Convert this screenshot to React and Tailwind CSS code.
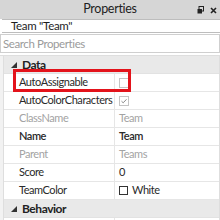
import { useState } from 'react'

const rows = [
  { label: 'AutoAssignable', type: 'check', checked: false },
  { label: 'AutoColorCharacters', type: 'check', checked: true },
  { label: 'ClassName', value: 'Team', muted: true },
  { label: 'Name', value: 'Team', strong: true },
  { label: 'Parent', value: 'Teams', muted: true },
  { label: 'Score', value: '0' },
  { label: 'TeamColor', type: 'color', value: 'White' },
]

function Caret() {
  return (
    <svg width="6" height="6" viewBox="0 0 6 6" className="shrink-0">
      <polygon points="6,0 6,6 0,6" fill="#333" />
    </svg>
  )
}

function Checkbox({ checked }) {
  return (
    <span className="flex h-[10px] w-[10px] items-center justify-center border border-[#c4c4c4] bg-white">
      {checked && (
        <svg width="8" height="8" viewBox="0 0 8 8">
          <path d="M1.5 4.2 L3.2 5.8 L6.5 2.3" fill="none" stroke="#8a8a8a" strokeWidth="1" />
        </svg>
      )}
    </span>
  )
}

function SectionHeader({ title }) {
  return (
    <div className="flex h-[18px] items-center gap-[5px] border-b border-[#e2e2e2] bg-[#e9e9e9] pl-[7px] text-[12px] font-bold text-[#222]">
      <Caret />
      <span>{title}</span>
    </div>
  )
}

function PropRow({ row }) {
  const tone = row.muted ? 'text-[#a3a3a3]' : 'text-[#2a2a2a]'
  const weight = row.strong ? 'font-semibold' : 'font-normal'
  return (
    <div className="flex h-[18px] border-b border-[#e6e6e6] bg-white">
      <div className={`flex w-[110px] items-center overflow-hidden whitespace-nowrap pl-[15px] ${tone} ${weight}`}>{row.label}</div>
      <div className={`flex flex-1 items-center border-l border-[#e6e6e6] pl-[4px] ${tone} ${weight}`}>
        {row.type === 'check' && <Checkbox checked={row.checked} />}
        {row.type === 'color' && (
          <span className="flex items-center gap-[4px]">
            <span className="h-[9px] w-[9px] border border-[#333] bg-white" />
            <span>{row.value}</span>
          </span>
        )}
        {!row.type && row.value}
      </div>
    </div>
  )
}

export default function App() {
  const [query, setQuery] = useState('')

  return (
    <div className="relative h-[220px] w-[220px] overflow-hidden bg-white font-['Lato',sans-serif] text-[11px] tracking-[-0.45px] text-[#2a2a2a]">
      <div className="relative flex h-[19px] items-center justify-center bg-[#d6d6d6] text-[12.5px] tracking-[-0.3px] text-[#1e1e1e]">
        <span>Properties</span>
        <div className="absolute right-[3px] top-[6px] flex items-center gap-[6px]">
          <svg width="7" height="8" viewBox="0 0 7 8">
            <rect x="2" y="0.5" width="4.5" height="4.5" fill="none" stroke="#222" />
            <rect x="0.5" y="3" width="4.5" height="4.5" fill="#222" />
          </svg>
          <svg width="7" height="7" viewBox="0 0 7 7">
            <path d="M1 1 L6 6 M6 1 L1 6" stroke="#222" strokeWidth="1.6" />
          </svg>
        </div>
      </div>

      <div className="ml-[2px] flex h-[14px] items-center border-y border-[#bdbdbd] pl-[9px] text-[11.5px] tracking-[-0.3px] text-[#1e1e1e]">
        Team "Team"
      </div>

      <div className="mt-[1px] h-[19px] border border-[#cfcfcf] bg-white">
        <input
          value={query}
          onChange={(e) => setQuery(e.target.value)}
          placeholder="Search Properties"
          className="h-full w-full bg-transparent px-[2px] text-[11.5px] tracking-[-0.4px] text-[#333] outline-none placeholder:text-[#9b9b9b]"
        />
      </div>

      <div className="mt-[2px] flex border-t border-[#dedede]">
        <div className="w-[3px] bg-[#f2f2f2]" />
        <div className="flex-1 border-l border-r border-[#dedede]">
          <SectionHeader title="Data" />
          {rows.map((row) => (
            <PropRow key={row.label} row={row} />
          ))}
          <SectionHeader title="Behavior" />
          <PropRow row={{ label: 'Archivable', type: 'check', checked: true }} />
        </div>
      </div>

      <div className="pointer-events-none absolute left-[13px] top-[69px] h-[23px] w-[118px] border-[3px] border-[#e3131b]" />
    </div>
  )
}
